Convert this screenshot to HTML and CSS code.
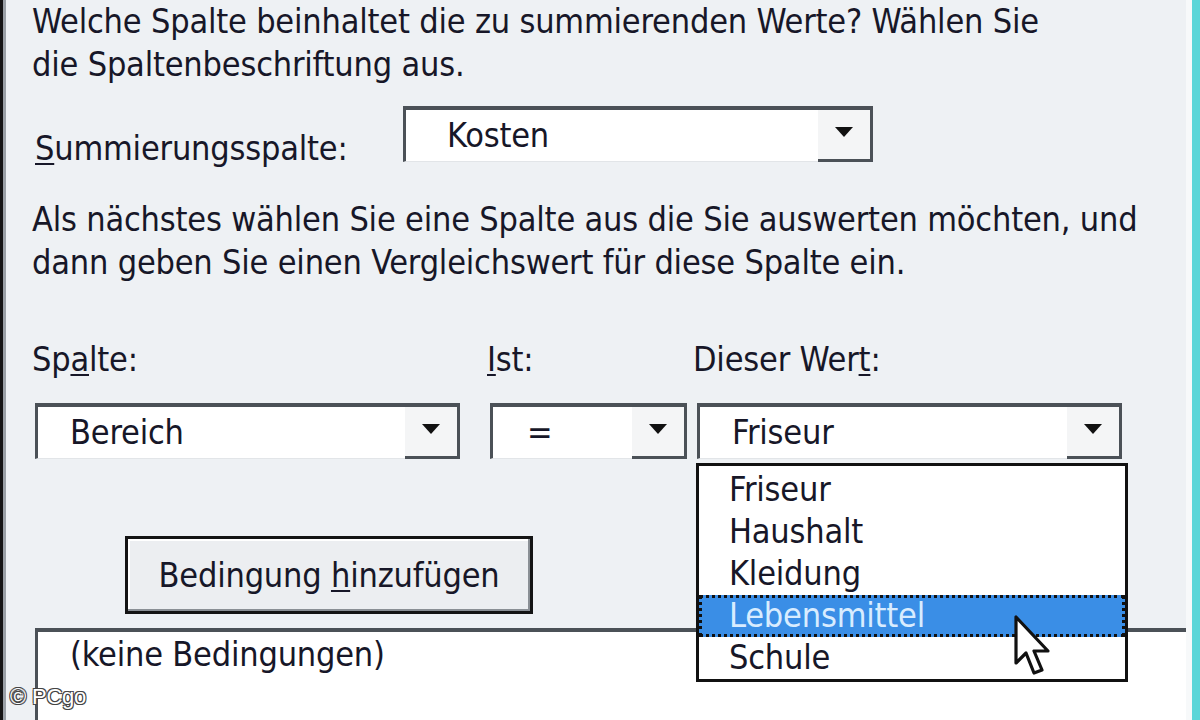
FILE: index.html
```html
<!DOCTYPE html>
<html lang="de">
<head>
    <meta charset="UTF-8">
    <title>Summierungs-Assistent</title>
    <link rel="stylesheet" href="styles.css">
</head>
<body>
    <div class="dialog">
        <div class="content">
            <p class="text">Welche Spalte beinhaltet die zu summierenden Werte? Wählen Sie<br>die Spaltenbeschriftung aus.</p>

            <div class="sum-row">
                <label class="sum-label"><u>S</u>ummierungsspalte:</label>
                <div class="combo combo-sum">
                    <span class="combo-value">Kosten</span>
                    <span class="combo-btn"><span class="arrow"></span></span>
                </div>
            </div>

            <p class="text text-second">Als nächstes wählen Sie eine Spalte aus die Sie auswerten möchten, und<br>dann geben Sie einen Vergleichswert für diese Spalte ein.</p>

            <div class="cond-grid">
                <label class="col-label">Sp<u>a</u>lte:</label>
                <label class="col-label"><u>I</u>st:</label>
                <label class="col-label col-last">Dieser Wer<u>t</u>:</label>

                <div class="combo">
                    <span class="combo-value">Bereich</span>
                    <span class="combo-btn"><span class="arrow"></span></span>
                </div>
                <div class="combo">
                    <span class="combo-value combo-eq">=</span>
                    <span class="combo-btn"><span class="arrow"></span></span>
                </div>
                <div class="combo combo-open">
                    <span class="combo-value">Friseur</span>
                    <span class="combo-btn"><span class="arrow"></span></span>

                    <ul class="dropdown">
                        <li>Friseur</li>
                        <li>Haushalt</li>
                        <li>Kleidung</li>
                        <li class="selected">Lebensmittel</li>
                        <li>Schule</li>
                    </ul>
                    <svg class="cursor" width="40" height="66" viewBox="0 0 20 33">
                        <path d="M1 1 L1 24 L6 19 L10 29 L14 27.5 L10 18 L17 18 Z" fill="#fff" stroke="#111" stroke-width="1.6" stroke-linejoin="round"/>
                    </svg>
                </div>
            </div>

            <div class="add-row">
                <button class="add-btn">Bedingung <u>h</u>inzufügen</button>
            </div>

            <div class="listbox">
                <div class="list-item">(keine Bedingungen)</div>
            </div>
        </div>
        <div class="edge"></div>
    </div>
    <div class="watermark">© PCgo</div>
</body>
</html>
```

FILE: styles.css
```css
html, body {
    margin: 0;
    padding: 0;
}
body {
    width: 1200px;
    height: 720px;
    overflow: hidden;
    background: #eef1f4;
    font-family: 'DejaVu Sans Condensed', 'DejaVu Sans', sans-serif;
    font-size: 34px;
    letter-spacing: -0.2px;
    color: #171728;
    position: relative;
}
.dialog {
    display: flex;
    height: 720px;
    border-left: 3px solid #151515;
    box-shadow: inset 3px 0 0 #9aa0a6;
}
.content {
    flex: 1;
    padding: 0 0 0 29px;
}
.edge {
    width: 8px;
    background: #5cd6d8;
    border-left: 6px solid #f7f9fa;
}
u {
    text-decoration-thickness: 2px;
    text-underline-offset: 3px;
}
.text {
    margin: 0;
    line-height: 43px;
}
.text-second {
    margin-top: 30px;
}
.sum-row {
    display: flex;
    align-items: center;
    margin-top: 14px;
    margin-left: 3px;
}
.sum-label {
    width: 368px;
    padding-top: 28px;
}
.combo {
    display: flex;
    height: 56px;
    box-sizing: border-box;
    background: #fff;
    border-top: 4px solid #4b5157;
    border-left: 3px solid #4b5157;
    border-bottom: 1px solid #e2e5e8;
    position: relative;
}
.combo-sum {
    width: 470px;
}
.combo-value {
    flex: 1;
    padding-left: 32px;
    line-height: 50px;
}
.combo-sum .combo-value {
    padding-left: 41px;
}
.combo-eq {
    padding-left: 34px;
}
.combo-btn {
    width: 52px;
    background: #f4f5f6;
    border-right: 3px solid #4b5157;
    border-bottom: 3px solid #4b5157;
    display: flex;
    align-items: center;
    justify-content: center;
    margin-bottom: -1px;
}
.arrow {
    width: 0;
    height: 0;
    border-left: 9px solid transparent;
    border-right: 9px solid transparent;
    border-top: 10px solid #111;
    margin-top: -6px;
}
.cond-grid {
    display: grid;
    grid-template-columns: 425px 197px 425px;
    column-gap: 30px;
    margin-top: 54px;
    margin-left: 3px;
}
.col-label {
    line-height: 43px;
    margin-left: -3px;
    margin-bottom: 22px;
}
.col-last {
    margin-left: -24px;
}
.combo-open {
    width: 425px;
    margin-left: -20px;
}
.dropdown {
    position: absolute;
    left: -4px;
    top: 56px;
    width: 432px;
    margin: 0;
    padding: 3px 0 0 0;
    list-style: none;
    background: #fff;
    border: 3px solid #111;
    box-sizing: border-box;
    z-index: 2;
}
.dropdown li {
    height: 42px;
    line-height: 40px;
    padding-left: 30px;
}
.dropdown li.selected {
    background: #3a8ee6;
    color: #d8ecff;
    outline: 3px dotted #111;
    outline-offset: -3px;
}
.cursor {
    position: absolute;
    left: 314px;
    top: 208px;
    z-index: 3;
}
.add-row {
    margin-top: 77px;
    padding-left: 93px;
}
.add-btn {
    width: 408px;
    height: 78px;
    background: #eceef1;
    border: 3px solid #141414;
    box-shadow: inset -2px -2px 0 #8a8f95, inset 2px 2px 0 #ffffff;
    font-family: inherit;
    font-size: 34px;
    letter-spacing: -0.2px;
    color: #171728;
    padding: 0;
}
.listbox {
    margin-top: 14px;
    margin-left: 3px;
    height: 120px;
    background: #fff;
    border-top: 4px solid #4b5157;
    border-left: 3px solid #4b5157;
}
.list-item {
    padding-left: 32px;
    line-height: 44px;
}
.watermark {
    position: absolute;
    left: 10px;
    top: 684px;
    font-family: 'Liberation Sans', Arial, sans-serif;
    font-size: 22px;
    color: #fff;
    text-shadow: -1px -1px 0 #444, 1px -1px 0 #444, -1px 1px 0 #444, 1px 1px 0 #444;
}
```
